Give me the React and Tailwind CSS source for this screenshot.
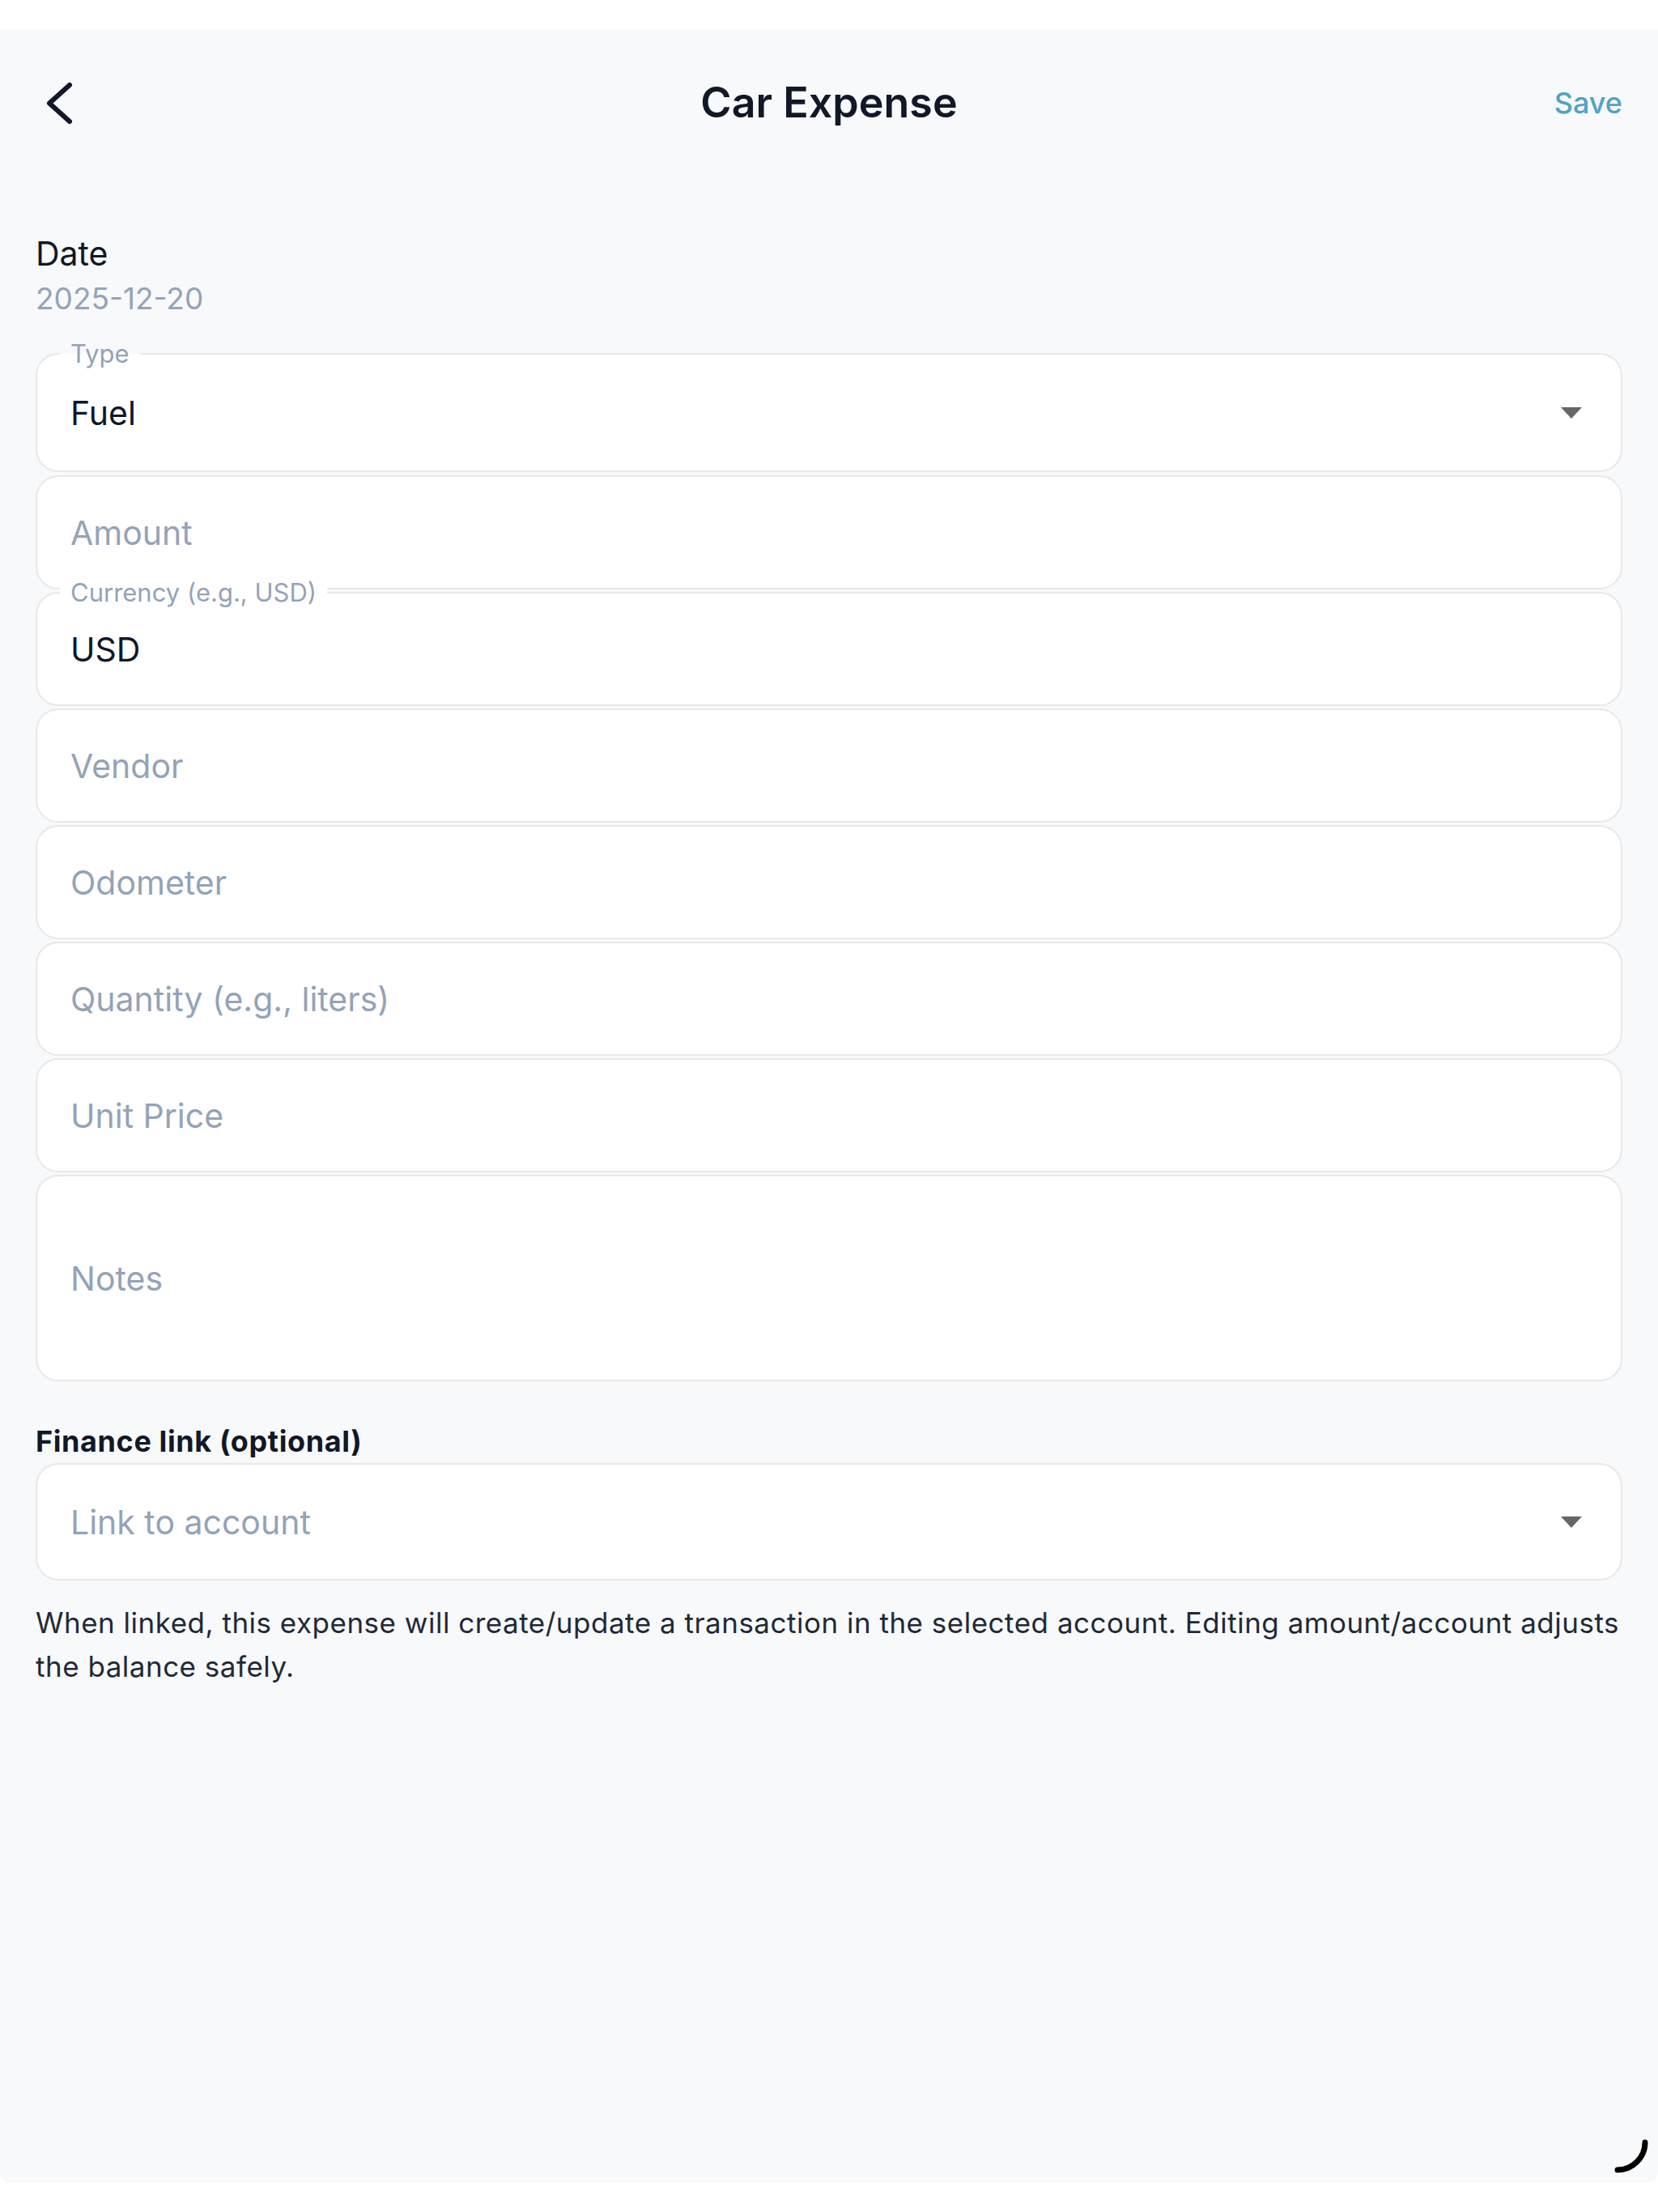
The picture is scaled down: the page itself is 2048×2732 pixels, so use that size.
import React from 'react';

const Caret = () => (
  <svg width="26" height="14" viewBox="0 0 26 14" className="shrink-0">
    <polygon points="0,0 26,0 13,14" fill="#666666" />
  </svg>
);

const Field = ({ label, labelBg = 'bg-white', value, placeholder, caret, className = 'h-[141px]' }) => (
  <div className={`relative flex items-center justify-between rounded-[28px] border-2 border-[#e8e8e8] bg-white pl-[41px] pr-[48px] ${className}`}>
    {label && (
      <span className={`absolute left-[28px] top-[-20px] px-[13px] text-[31px] leading-[38px] text-[#94a3b8] ${labelBg}`}>
        {label}
      </span>
    )}
    {value ? (
      <span className="text-[41px] leading-[50px] text-[#0f172a]">{value}</span>
    ) : (
      <span className="text-[41px] leading-[50px] text-[#94a3b8]">{placeholder}</span>
    )}
    {caret && <Caret />}
  </div>
);

const App = () => {
  return (
    <div className="min-h-[2732px] bg-white flex flex-col font-['Inter',sans-serif]">
      <div className="h-[36px] shrink-0" />
      <div className="relative h-[2660px] bg-[#f8f9fb] rounded-b-[14px]">
        {/* header */}
        <div className="flex h-[182px] items-center px-[44px]">
          <div className="w-[300px] pl-[9px]">
            <svg width="40" height="60" viewBox="0 0 40 60" fill="none">
              <path d="M33 8 L8 30.5 L33 53" stroke="#111827" strokeWidth="6" strokeLinecap="round" strokeLinejoin="round" />
            </svg>
          </div>
          <div className="flex-1 text-center text-[52px] font-semibold leading-[64px] text-[#111827]">Car Expense</div>
          <div className="w-[300px] text-right text-[36px] font-medium leading-[44px] text-[#4fa3c6]">Save</div>
        </div>

        {/* form */}
        <div className="flex flex-col px-[44px] pt-[70px]">
          <div className="text-[41px] leading-[50px] text-[#111827]">Date</div>
          <div className="mt-[9px] text-[37px] leading-[44px] text-[#94a3b8]">2025-12-20</div>

          <div className="mt-[45px] flex flex-col gap-[3px]">
            <Field
              label="Type"
              labelBg="bg-[linear-gradient(to_bottom,#f8f9fb_50%,#ffffff_50%)]"
              value="Fuel"
              caret
              className="h-[147px] mb-[1px]"
            />
            <Field placeholder="Amount" />
            <Field label="Currency (e.g., USD)" value="USD" />
            <Field placeholder="Vendor" />
            <Field placeholder="Odometer" />
            <Field placeholder="Quantity (e.g., liters)" />
            <Field placeholder="Unit Price" />
            <Field placeholder="Notes" className="h-[255px]" />
          </div>

          <div className="mt-[52px] text-[36px] font-bold leading-[44px] tracking-[0.6px] text-[#111827]">Finance link (optional)</div>
          <div className="mt-[5px]">
            <Field placeholder="Link to account" caret className="h-[145px]" />
          </div>
          <p className="mt-[25px] text-[35px] leading-[54px] tracking-[0.5px] text-[#1f2937]">
            When linked, this expense will create/update a transaction in the selected account. Editing amount/account adjusts the balance safely.
          </p>
        </div>

        {/* activity indicator */}
        <svg className="absolute right-[8px] bottom-[8px]" width="50" height="50" viewBox="0 0 50 50" fill="none">
          <path d="M8 42 A34 34 0 0 0 42 8" stroke="#000000" strokeWidth="7" strokeLinecap="round" />
        </svg>
      </div>
    </div>
  );
};

export default App;
